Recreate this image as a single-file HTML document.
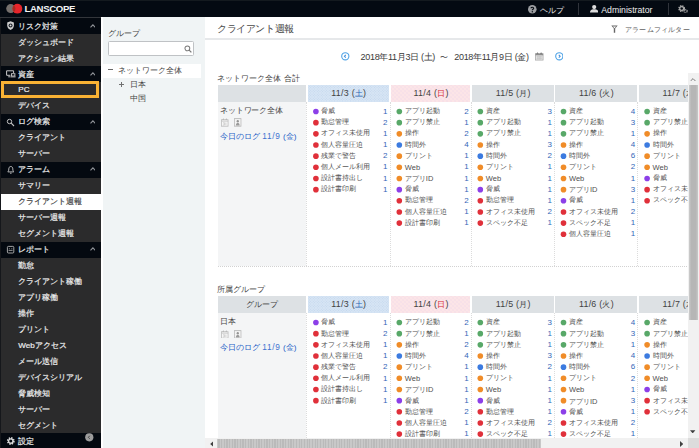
<!DOCTYPE html>
<html lang="ja"><head><meta charset="utf-8"><title>LANSCOPE</title>
<style>
*{box-sizing:border-box;margin:0;padding:0}
html,body{width:699px;height:448px;overflow:hidden;background:#fff}
body{position:relative;font-family:"Liberation Sans",sans-serif;font-size:8px;color:#3c3c3c;line-height:1}
.a{position:absolute}
.t{position:absolute;white-space:nowrap;line-height:1}
#top{left:0;top:0;width:699px;height:17px;background:#040a12;box-shadow:inset 0 1px 0 #141a1f}
#side{left:0;top:17px;width:101px;height:431px;background:#2b2b2c;overflow:hidden}
.sh{position:absolute;left:0;width:101px;height:16.1px;background:#040910}
.si{position:absolute;left:0;width:101px;height:16px}
.st{position:absolute;left:18.3px;top:4.5px;font-size:8.1px;color:#ececec;-webkit-text-stroke:.2px #ececec;white-space:nowrap;line-height:1}
.sh .st{left:17.8px;top:4.5px;font-size:8px;color:#ececec}
.chev{position:absolute;left:89.5px;top:5.6px;width:5.8px;height:4px}
.ico{position:absolute;left:6px;top:2px;width:10px;height:12px}
#grp{left:101px;top:17px;width:104px;height:431px;background:#f0f4f5}
#main{left:205px;top:17px;width:494px;height:431px;background:#fff;overflow:hidden}
.hd{position:absolute;height:16.9px;top:0;padding-left:.7px;font-size:8.9px;letter-spacing:.25px;color:#424242;text-align:center;line-height:17.4px;white-space:nowrap;overflow:hidden}
.c0{background:#dde1e4}
.cb{background:radial-gradient(circle,#c3d6ed .5px,rgba(195,214,237,0) .9px) 0 0/2.67px 2.67px,radial-gradient(circle,#c3d6ed .5px,rgba(195,214,237,0) .9px) 1.33px 1.33px/2.67px 2.67px,#d7e5f4}
.cp{background:radial-gradient(circle,#e6d2e9 .4px,rgba(230,210,233,0) .8px) 0 0/4px 4px,radial-gradient(circle,#e6d2e9 .4px,rgba(230,210,233,0) .8px) 2px 2px/4px 4px,#fce5e7}
.cg{background:#dde1e4}
.k{font-size:7.8px}.sat{color:#2b66b3}.sun{color:#d42a35}
.cell{position:absolute;background:#fff;border-right:0}
.vl{position:absolute;width:0;border-left:1px dotted #dcdcdc}
.hl{position:absolute;height:0;border-top:1px dotted #d2d2d2}
.it{position:absolute;font-size:6.9px;color:#505050;white-space:nowrap;line-height:1}
.nm{position:absolute;font-size:8px;color:#3567b8;white-space:nowrap;line-height:1;text-align:right;width:12px}
.d{position:absolute;left:0;top:0;width:6px;height:6px;border-radius:50%;transform-origin:0 0}
.P{background:#8c3fe8}.R{background:#e0303a}.G{background:#58a868}.O{background:#f08c28}.B{background:#3c7be0}
.lnk{color:#2560c6}
.l{font-size:7.5px}
</style></head><body>
<div id="top" class="a">
<svg class="a" style="left:0;top:0" width="30" height="17" viewBox="0 0 30 17"><circle cx="10.7" cy="8.6" r="4.5" fill="#75706d"/><circle cx="17.4" cy="8.7" r="4.9" fill="#e6252b"/><path d="M13.9 5.3A4.9 4.9 0 0 0 13.9 12.100A4.500 4.500 0 0 0 13.900 5.300Z" fill="#a52c22"/></svg>
<div class="t" style="left:24.5px;top:4px;font-size:9.6px;font-weight:bold;color:#f4f4f4;letter-spacing:-.35px">LANSCOPE</div>
<svg class="a" style="left:528.3px;top:5.2px" width="8.6" height="8.6" viewBox="0 0 10 10"><circle cx="5" cy="5" r="5" fill="#9c9ea1"/><path d="M3.5 3.9C3.5 2.2 6.6 2.2 6.6 3.9C6.6 5 5 5 5 6.2" stroke="#040a12" stroke-width="1.3" fill="none"/><circle cx="5" cy="7.8" r=".8" fill="#040a12"/></svg>
<div class="t" style="left:539.5px;top:5.8px;font-size:8.3px;color:#e6e6e6">ヘルプ</div>
<div class="a" style="left:578px;top:3px;width:1px;height:12px;background:#30343b"></div>
<svg class="a" style="left:589.6px;top:5px" width="8.4" height="7.6" viewBox="0 0 10 9"><circle cx="5" cy="2.5" r="2.5" fill="#dcdcdc"/><path d="M0 9C0 5.5 3 5 5 5S10 5.5 10 9Z" fill="#dcdcdc"/></svg>
<div class="t" style="left:601.3px;top:5.5px;font-size:8.7px;color:#ededed">Administrator</div>
<div class="a" style="left:667.5px;top:3px;width:1px;height:12px;background:#30343b"></div>
<svg class="a" style="left:678.4px;top:4.6px" width="10" height="8.4" viewBox="0 0 12 10"><circle cx="4.4" cy="4.2" r="3" fill="none" stroke="#a6a6a6" stroke-width="2.2" stroke-dasharray="1.5 0.9"/><circle cx="4.4" cy="4.2" r="2.3" fill="none" stroke="#a6a6a6" stroke-width="1.4"/><circle cx="9.2" cy="7.4" r="1.7" fill="none" stroke="#a6a6a6" stroke-width="1.6" stroke-dasharray="1 0.7"/></svg>
</div>
<div id="side" class="a">
<div class="a" style="left:0;top:0;width:101px;height:1.3px;background:#33363b"></div>
<div class="sh" style="top:1.1px"><svg class="ico" viewBox="0 0 10 12"><path d="M4.55 1.3L7.9 2.6V5.6C7.9 8 6.1 9.4 4.55 10.1C3 9.4 1.2 8 1.2 5.6V2.6Z" fill="#cfcfcf"/><circle cx="4.55" cy="5.4" r="2" fill="#1a1e26"/><circle cx="4.55" cy="5.4" r=".9" fill="#dedede"/></svg><span class="st">リスク対策</span><svg class="chev" viewBox="0 0 6 4"><path d="M.5 3.5L3 .8L5.5 3.5" fill="none" stroke="#8e9196" stroke-width="1.15"/></svg></div>
<div class="si" style="top:17.07px"><span class="st">ダッシュボード</span></div>
<div class="si" style="top:33.04px"><span class="st">アクション結果</span></div>
<div class="sh" style="top:49.010000000000005px"><svg class="ico" viewBox="0 0 10 12"><path d="M.6 2.8H7.6V5M.6 2.8V7.3H4.4M2.2 8.8H4.4" stroke="#c8c8c8" stroke-width="1" fill="none"/><rect x="5.5" y="5.7" width="3.4" height="2.3" fill="none" stroke="#c8c8c8" stroke-width=".9"/><path d="M4.6 8.9H9.6" stroke="#c8c8c8" stroke-width=".9"/></svg><span class="st">資産</span><svg class="chev" viewBox="0 0 6 4"><path d="M.5 3.5L3 .8L5.5 3.5" fill="none" stroke="#8e9196" stroke-width="1.15"/></svg></div>
<div class="si" style="top:64.98px"><span class="st">PC</span><div class="a" style="left:.9px;top:-1.2px;width:98.2px;height:17px;border:3px solid #f9b234"></div></div>
<div class="si" style="top:80.95px"><span class="st">デバイス</span></div>
<div class="sh" style="top:96.92px"><svg class="ico" viewBox="0 0 10 12"><circle cx="3.5" cy="5.500" r="2.2" fill="none" stroke="#c4c4c4" stroke-width="1"/><path d="M5.2 7.2L8 10" stroke="#c4c4c4" stroke-width="1.1"/></svg><span class="st">ログ検索</span><svg class="chev" viewBox="0 0 6 4"><path d="M.5 3.5L3 .8L5.5 3.5" fill="none" stroke="#8e9196" stroke-width="1.15"/></svg></div>
<div class="si" style="top:112.89px"><span class="st">クライアント</span></div>
<div class="si" style="top:128.86px"><span class="st">サーバー</span></div>
<div class="sh" style="top:144.83px"><svg class="ico" viewBox="0 0 10 12"><path d="M4.8 2.5C3.300 2.5 2.800 3.800 2.800 5C2.800 6.600 2.300 7.300 1.800 7.900H7.800C7.300 7.300 6.800 6.600 6.800 5C6.800 3.800 6.300 2.500 4.800 2.500Z" fill="none" stroke="#c4c4c4" stroke-width=".9"/><path d="M4 9.200H5.600" stroke="#c4c4c4" stroke-width=".9"/></svg><span class="st">アラーム</span><svg class="chev" viewBox="0 0 6 4"><path d="M.5 3.5L3 .8L5.5 3.5" fill="none" stroke="#8e9196" stroke-width="1.15"/></svg></div>
<div class="si" style="top:160.8px"><span class="st">サマリー</span></div>
<div class="si" style="top:176.77px;background:#fff"><span class="st" style="color:#3a3a3a;-webkit-text-stroke:.15px #3a3a3a">クライアント週報</span></div>
<div class="si" style="top:192.74px"><span class="st">サーバー週報</span></div>
<div class="si" style="top:208.71px"><span class="st">セグメント週報</span></div>
<div class="sh" style="top:224.68px"><svg class="ico" viewBox="0 0 10 12"><rect x="1.400" y="2.400" width="6.400" height="6.600" rx="1" fill="none" stroke="#b4b4b4" stroke-width=".9"/><path d="M2.600 6.400H6.600M3.400 5.200V4.300M5.800 5.200V4.300" stroke="#b4b4b4" stroke-width=".8"/></svg><span class="st">レポート</span><svg class="chev" viewBox="0 0 6 4"><path d="M.5 3.5L3 .8L5.5 3.5" fill="none" stroke="#8e9196" stroke-width="1.15"/></svg></div>
<div class="si" style="top:240.65px"><span class="st">勤怠</span></div>
<div class="si" style="top:256.62px"><span class="st">クライアント稼働</span></div>
<div class="si" style="top:272.59000000000003px"><span class="st">アプリ稼働</span></div>
<div class="si" style="top:288.56000000000006px"><span class="st">操作</span></div>
<div class="si" style="top:304.53000000000003px"><span class="st">プリント</span></div>
<div class="si" style="top:320.50000000000006px"><span class="st">Webアクセス</span></div>
<div class="si" style="top:336.47px"><span class="st">メール送信</span></div>
<div class="si" style="top:352.44000000000005px"><span class="st">デバイスシリアル</span></div>
<div class="si" style="top:368.41px"><span class="st">脅威検知</span></div>
<div class="si" style="top:384.38000000000005px"><span class="st">サーバー</span></div>
<div class="si" style="top:400.35px"><span class="st">セグメント</span></div>
<div class="sh" style="top:416.32000000000005px"><svg class="ico" viewBox="0 0 10 12"><circle cx="4.800" cy="6" r="3" fill="none" stroke="#dcdcdc" stroke-width="1.800" stroke-dasharray="1.300 1.056"/><circle cx="4.800" cy="6" r="2.200" fill="none" stroke="#dcdcdc" stroke-width="1.300"/></svg><span class="st">設定</span><svg class="a" style="left:85.4px;top:.1px" width="8.600" height="8.600" viewBox="0 0 9 9"><circle cx="4.500" cy="4.500" r="4.300" fill="#9c9c9c"/><path d="M5 2.900L3.500 4.500L5 6.100" stroke="#3a3a3a" stroke-width=".9" fill="none"/></svg></div>
<div class="a" style="left:0;top:1.3px;width:.8px;height:430px;background:#15171b"></div>
</div>
<div id="grp" class="a">
<div class="a" style="left:0;top:0;width:2.3px;height:431px;background:#fff"></div>
<div class="t" style="left:7.4px;top:13.4px;font-size:8.1px;color:#444">グループ</div>
<div class="a" style="left:7.4px;top:24.3px;width:85.4px;height:14.3px;background:#fff;border:1px solid #bfc2c5;border-radius:1.5px"></div>
<svg class="a" style="left:82.5px;top:27.5px" width="8" height="8" viewBox="0 0 10 10"><circle cx="4.2" cy="4.2" r="3" fill="none" stroke="#777" stroke-width="1.3"/><path d="M6.4 6.4L9.2 9.2" stroke="#777" stroke-width="1.6"/></svg>
<div class="a" style="left:2.3px;top:46.8px;width:97.7px;height:13.9px;background:#fff"></div>
<div class="a" style="left:7.3px;top:52.3px;width:4.8px;height:1px;background:#6a6a6a"></div>
<div class="t" style="left:17px;top:50.1px;font-size:8.05px;color:#444">ネットワーク全体</div>
<div class="a" style="left:18px;top:66.5px;width:5px;height:1px;background:#707070"></div><div class="a" style="left:20px;top:64.5px;width:1px;height:5px;background:#707070"></div>
<div class="t" style="left:28.6px;top:64.1px;font-size:8.1px;color:#444">日本</div>
<div class="t" style="left:28.6px;top:77.7px;font-size:8.1px;color:#444">中国</div>
</div>
<div id="main" class="a">
<div class="t" style="left:12.3px;top:6.6px;font-size:10px;letter-spacing:-.45px;color:#484848">クライアント週報</div>
<div class="a" style="left:0;top:21.3px;width:494px;height:1.3px;background:#e6e8ea"></div>
<svg class="a" style="left:405.8px;top:7.8px" width="7" height="8.2" viewBox="0 0 9 10" preserveAspectRatio="none"><path d="M.4 .5H8.6L5.4 4.4V9.5H3.6V4.4Z" fill="#666"/><path d="M2.4 1.7H6.6L4.5 4Z" fill="#fff"/></svg>
<div class="t" style="left:420px;top:8.5px;font-size:7.3px;letter-spacing:.2px;color:#5a5a5a">アラームフィルター</div>
<svg class="a" style="left:136.1px;top:35.1px" width="8.6" height="8.6" viewBox="0 0 10 10"><circle cx="5" cy="5" r="4.2" fill="#fff" stroke="#4da2e6" stroke-width="1.25"/><path d="M5.6 3.4L4 5L5.6 6.6" fill="none" stroke="#3f8fdc" stroke-width="1.2"/></svg>
<div class="t" style="left:155.6px;top:35.6px;font-size:9px;letter-spacing:-.32px;color:#3a3a3a">2018年11月3日 (土)</div>
<div class="t" style="left:235.4px;top:35.9px;font-size:8.4px;color:#3a3a3a">〜</div>
<div class="t" style="left:249.3px;top:35.6px;font-size:9px;letter-spacing:-.32px;color:#3a3a3a">2018年11月9日 (金)</div>
<svg class="a" style="left:330.4px;top:35.2px" width="8.6" height="8.5" viewBox="0 0 10 10" preserveAspectRatio="none"><rect x=".6" y="2" width="8.8" height="7.500" fill="#e9e9e9" stroke="#a8a8a8" stroke-width=".9"/><rect x=".6" y="2" width="8.8" height="1.900" fill="#8c8c8c"/><path d="M1.600 2.200L2.900 .3L4.200 2.200ZM5.800 2.200L7.100 .3L8.400 2.200Z" fill="#6e6e6e"/><path d="M1.600 5.600H8.400M1.600 7.400H8.400M3.300 4.300V8.900M5 4.300V8.900M6.700 4.300V8.900" stroke="#bdbdbd" stroke-width=".7"/></svg>
<svg class="a" style="left:349.8px;top:35.1px" width="8.6" height="8.6" viewBox="0 0 10 10"><circle cx="5" cy="5" r="4.2" fill="#fff" stroke="#4da2e6" stroke-width="1.25"/><path d="M4.4 3.4L6 5L4.4 6.6" fill="none" stroke="#3f8fdc" stroke-width="1.2"/></svg>
<div class="t" style="left:12.4px;top:57.6px;font-size:7.95px;color:#444">ネットワーク全体 合計</div>
<div class="a" style="left:0;top:67.8px;width:483px;height:181.7px">
<div class="hd c0" style="left:12.7px;width:88.3px;font-size:7.8px;letter-spacing:0"></div>
<div class="a" style="left:12.7px;top:17.3px;width:88.3px;height:164.4px;background:#f4f5f6"></div>
<div class="t" style="left:15.0px;top:22.2px;font-size:7.95px;letter-spacing:-.15px;color:#444">ネットワーク全体</div>
<svg class="a" style="left:16.3px;top:33.6px" width="7.6" height="8.8" viewBox="0 0 10 10" preserveAspectRatio="none"><rect x=".7" y="2" width="8.6" height="7.300" fill="#f6f6f6" stroke="#bcbcbc" stroke-width="1"/><path d="M.7 3.600H9.300" stroke="#c4c4c4" stroke-width="1"/><path d="M1.800 2.100L3 .4L4.200 2.100ZM5.800 2.100L7 .4L8.200 2.100Z" fill="#b0b0b0"/><path d="M3 5.200H4.400V8H2.800M4.400 6.600H3.400M6.400 5.200V8" stroke="#c2c2c2" stroke-width=".8" fill="none"/></svg>
<svg class="a" style="left:29.3px;top:33.6px" width="7.5" height="8.8" viewBox="0 0 10 10" preserveAspectRatio="none"><rect x=".7" y=".7" width="8.600" height="8.600" fill="#f4f4f4" stroke="#b8b8b8" stroke-width="1"/><circle cx="5" cy="3.700" r="1.500" fill="#949494"/><path d="M2.500 8.400C2.500 6.200 3.800 5.700 5 5.700S7.500 6.200 7.500 8.400Z" fill="#9a9a9a"/></svg>
<div class="t lnk" style="left:14.9px;top:47.1px;font-size:8.1px">今日のログ <span style="font-size:8.3px;letter-spacing:.75px;color:#3c72d0">11/9</span> (金)</div>
<div class="vl" style="left:101.4px;top:17.3px;height:164.4px"></div>
<div class="hd cb" style="left:102.7px;width:81.6px">11/3 (<span class="k sat">土</span>)</div>
<div class="vl" style="left:184.6px;top:17.3px;height:164.4px"></div>
<div class="d P" style="transform:translate(108.10px,23.70px) scale(.935)"></div>
<div class="it" style="left:116.4px;top:23.4px">脅威</div>
<div class="nm" style="left:170.5px;top:22.8px">1</div>
<div class="d R" style="transform:translate(108.10px,34.86px) scale(.935)"></div>
<div class="it" style="left:116.4px;top:34.6px">勤怠管理</div>
<div class="nm" style="left:170.5px;top:34.0px">2</div>
<div class="d R" style="transform:translate(108.10px,46.02px) scale(.935)"></div>
<div class="it" style="left:116.4px;top:45.7px">オフィス未使用</div>
<div class="nm" style="left:170.5px;top:45.1px">1</div>
<div class="d R" style="transform:translate(108.10px,57.18px) scale(.935)"></div>
<div class="it" style="left:116.4px;top:56.9px">個人容量圧迫</div>
<div class="nm" style="left:170.5px;top:56.3px">1</div>
<div class="d R" style="transform:translate(108.10px,68.34px) scale(.935)"></div>
<div class="it" style="left:116.4px;top:68.0px">残業で警告</div>
<div class="nm" style="left:170.5px;top:67.4px">2</div>
<div class="d R" style="transform:translate(108.10px,79.50px) scale(.935)"></div>
<div class="it" style="left:116.4px;top:79.2px">個人メール利用</div>
<div class="nm" style="left:170.5px;top:78.6px">1</div>
<div class="d R" style="transform:translate(108.10px,90.66px) scale(.935)"></div>
<div class="it" style="left:116.4px;top:90.4px">設計書持出し</div>
<div class="nm" style="left:170.5px;top:89.8px">1</div>
<div class="d R" style="transform:translate(108.10px,101.82px) scale(.935)"></div>
<div class="it" style="left:116.4px;top:101.5px">設計書印刷</div>
<div class="nm" style="left:170.5px;top:100.9px">1</div>
<div class="hd cp" style="left:186.1px;width:79.3px">11/4 (<span class="k sun">日</span>)</div>
<div class="vl" style="left:265.7px;top:17.3px;height:164.4px"></div>
<div class="d G" style="transform:translate(191.50px,23.70px) scale(.935)"></div>
<div class="it" style="left:199.8px;top:23.4px">アプリ起動</div>
<div class="nm" style="left:251.6px;top:22.8px">2</div>
<div class="d G" style="transform:translate(191.50px,34.86px) scale(.935)"></div>
<div class="it" style="left:199.8px;top:34.6px">アプリ禁止</div>
<div class="nm" style="left:251.6px;top:34.0px">1</div>
<div class="d O" style="transform:translate(191.50px,46.02px) scale(.935)"></div>
<div class="it" style="left:199.8px;top:45.7px">操作</div>
<div class="nm" style="left:251.6px;top:45.1px">2</div>
<div class="d B" style="transform:translate(191.50px,57.18px) scale(.935)"></div>
<div class="it" style="left:199.8px;top:56.9px">時間外</div>
<div class="nm" style="left:251.6px;top:56.3px">4</div>
<div class="d O" style="transform:translate(191.50px,68.34px) scale(.935)"></div>
<div class="it" style="left:199.8px;top:68.0px">プリント</div>
<div class="nm" style="left:251.6px;top:67.4px">1</div>
<div class="d O" style="transform:translate(191.50px,79.50px) scale(.935)"></div>
<div class="it" style="left:199.8px;top:79.2px"><span class="l">Web</span></div>
<div class="nm" style="left:251.6px;top:78.6px">1</div>
<div class="d O" style="transform:translate(191.50px,90.66px) scale(.935)"></div>
<div class="it" style="left:199.8px;top:90.4px">アプリ<span class="l">ID</span></div>
<div class="nm" style="left:251.6px;top:89.8px">1</div>
<div class="d P" style="transform:translate(191.50px,101.82px) scale(.935)"></div>
<div class="it" style="left:199.8px;top:101.5px">脅威</div>
<div class="nm" style="left:251.6px;top:100.9px">1</div>
<div class="d R" style="transform:translate(191.50px,112.98px) scale(.935)"></div>
<div class="it" style="left:199.8px;top:112.7px">勤怠管理</div>
<div class="nm" style="left:251.6px;top:112.1px">2</div>
<div class="d R" style="transform:translate(191.50px,124.14px) scale(.935)"></div>
<div class="it" style="left:199.8px;top:123.8px">個人容量圧迫</div>
<div class="nm" style="left:251.6px;top:123.2px">1</div>
<div class="d R" style="transform:translate(191.50px,135.30px) scale(.935)"></div>
<div class="it" style="left:199.8px;top:135.0px">設計書印刷</div>
<div class="nm" style="left:251.6px;top:134.4px">1</div>
<div class="hd cg" style="left:267.1px;width:81.6px">11/5 (<span class="k">月</span>)</div>
<div class="vl" style="left:349.0px;top:17.3px;height:164.4px"></div>
<div class="d G" style="transform:translate(272.50px,23.70px) scale(.935)"></div>
<div class="it" style="left:280.8px;top:23.4px">資産</div>
<div class="nm" style="left:334.9px;top:22.8px">3</div>
<div class="d G" style="transform:translate(272.50px,34.86px) scale(.935)"></div>
<div class="it" style="left:280.8px;top:34.6px">アプリ起動</div>
<div class="nm" style="left:334.9px;top:34.0px">1</div>
<div class="d G" style="transform:translate(272.50px,46.02px) scale(.935)"></div>
<div class="it" style="left:280.8px;top:45.7px">アプリ禁止</div>
<div class="nm" style="left:334.9px;top:45.1px">1</div>
<div class="d O" style="transform:translate(272.50px,57.18px) scale(.935)"></div>
<div class="it" style="left:280.8px;top:56.9px">操作</div>
<div class="nm" style="left:334.9px;top:56.3px">3</div>
<div class="d B" style="transform:translate(272.50px,68.34px) scale(.935)"></div>
<div class="it" style="left:280.8px;top:68.0px">時間外</div>
<div class="nm" style="left:334.9px;top:67.4px">2</div>
<div class="d O" style="transform:translate(272.50px,79.50px) scale(.935)"></div>
<div class="it" style="left:280.8px;top:79.2px">プリント</div>
<div class="nm" style="left:334.9px;top:78.6px">1</div>
<div class="d O" style="transform:translate(272.50px,90.66px) scale(.935)"></div>
<div class="it" style="left:280.8px;top:90.4px"><span class="l">Web</span></div>
<div class="nm" style="left:334.9px;top:89.8px">1</div>
<div class="d P" style="transform:translate(272.50px,101.82px) scale(.935)"></div>
<div class="it" style="left:280.8px;top:101.5px">脅威</div>
<div class="nm" style="left:334.9px;top:100.9px">1</div>
<div class="d R" style="transform:translate(272.50px,112.98px) scale(.935)"></div>
<div class="it" style="left:280.8px;top:112.7px">勤怠管理</div>
<div class="nm" style="left:334.9px;top:112.1px">1</div>
<div class="d R" style="transform:translate(272.50px,124.14px) scale(.935)"></div>
<div class="it" style="left:280.8px;top:123.8px">オフィス未使用</div>
<div class="nm" style="left:334.9px;top:123.2px">2</div>
<div class="d R" style="transform:translate(272.50px,135.30px) scale(.935)"></div>
<div class="it" style="left:280.8px;top:135.0px">スペック不足</div>
<div class="nm" style="left:334.9px;top:134.4px">1</div>
<div class="hd cg" style="left:350.3px;width:81.6px">11/6 (<span class="k">火</span>)</div>
<div class="vl" style="left:432.2px;top:17.3px;height:164.4px"></div>
<div class="d G" style="transform:translate(355.70px,23.70px) scale(.935)"></div>
<div class="it" style="left:364.0px;top:23.4px">資産</div>
<div class="nm" style="left:418.1px;top:22.8px">4</div>
<div class="d G" style="transform:translate(355.70px,34.86px) scale(.935)"></div>
<div class="it" style="left:364.0px;top:34.6px">アプリ起動</div>
<div class="nm" style="left:418.1px;top:34.0px">3</div>
<div class="d G" style="transform:translate(355.70px,46.02px) scale(.935)"></div>
<div class="it" style="left:364.0px;top:45.7px">アプリ禁止</div>
<div class="nm" style="left:418.1px;top:45.1px">1</div>
<div class="d O" style="transform:translate(355.70px,57.18px) scale(.935)"></div>
<div class="it" style="left:364.0px;top:56.9px">操作</div>
<div class="nm" style="left:418.1px;top:56.3px">4</div>
<div class="d B" style="transform:translate(355.70px,68.34px) scale(.935)"></div>
<div class="it" style="left:364.0px;top:68.0px">時間外</div>
<div class="nm" style="left:418.1px;top:67.4px">6</div>
<div class="d O" style="transform:translate(355.70px,79.50px) scale(.935)"></div>
<div class="it" style="left:364.0px;top:79.2px">プリント</div>
<div class="nm" style="left:418.1px;top:78.6px">2</div>
<div class="d O" style="transform:translate(355.70px,90.66px) scale(.935)"></div>
<div class="it" style="left:364.0px;top:90.4px"><span class="l">Web</span></div>
<div class="nm" style="left:418.1px;top:89.8px">1</div>
<div class="d O" style="transform:translate(355.70px,101.82px) scale(.935)"></div>
<div class="it" style="left:364.0px;top:101.5px">アプリ<span class="l">ID</span></div>
<div class="nm" style="left:418.1px;top:100.9px">3</div>
<div class="d P" style="transform:translate(355.70px,112.98px) scale(.935)"></div>
<div class="it" style="left:364.0px;top:112.7px">脅威</div>
<div class="nm" style="left:418.1px;top:112.1px">1</div>
<div class="d R" style="transform:translate(355.70px,124.14px) scale(.935)"></div>
<div class="it" style="left:364.0px;top:123.8px">オフィス未使用</div>
<div class="nm" style="left:418.1px;top:123.2px">2</div>
<div class="d R" style="transform:translate(355.70px,135.30px) scale(.935)"></div>
<div class="it" style="left:364.0px;top:135.0px">スペック不足</div>
<div class="nm" style="left:418.1px;top:134.4px">1</div>
<div class="d R" style="transform:translate(355.70px,146.46px) scale(.935)"></div>
<div class="it" style="left:364.0px;top:146.2px">個人容量圧迫</div>
<div class="nm" style="left:418.1px;top:145.6px">1</div>
<div class="hd cg" style="left:433.9px;width:81.6px">11/7 (<span class="k">水</span>)</div>
<div class="vl" style="left:515.8px;top:17.3px;height:164.4px"></div>
<div class="d G" style="transform:translate(439.30px,23.70px) scale(.935)"></div>
<div class="it" style="left:447.6px;top:23.4px">資産</div>
<div class="nm" style="left:501.7px;top:22.8px">2</div>
<div class="d G" style="transform:translate(439.30px,34.86px) scale(.935)"></div>
<div class="it" style="left:447.6px;top:34.6px">アプリ禁止</div>
<div class="nm" style="left:501.7px;top:34.0px">1</div>
<div class="d O" style="transform:translate(439.30px,46.02px) scale(.935)"></div>
<div class="it" style="left:447.6px;top:45.7px">操作</div>
<div class="nm" style="left:501.7px;top:45.1px">3</div>
<div class="d B" style="transform:translate(439.30px,57.18px) scale(.935)"></div>
<div class="it" style="left:447.6px;top:56.9px">時間外</div>
<div class="nm" style="left:501.7px;top:56.3px">2</div>
<div class="d O" style="transform:translate(439.30px,68.34px) scale(.935)"></div>
<div class="it" style="left:447.6px;top:68.0px">プリント</div>
<div class="nm" style="left:501.7px;top:67.4px">1</div>
<div class="d O" style="transform:translate(439.30px,79.50px) scale(.935)"></div>
<div class="it" style="left:447.6px;top:79.2px"><span class="l">Web</span></div>
<div class="nm" style="left:501.7px;top:78.6px">1</div>
<div class="d P" style="transform:translate(439.30px,90.66px) scale(.935)"></div>
<div class="it" style="left:447.6px;top:90.4px">脅威</div>
<div class="nm" style="left:501.7px;top:89.8px">1</div>
<div class="d R" style="transform:translate(439.30px,101.82px) scale(.935)"></div>
<div class="it" style="left:447.6px;top:101.5px">オフィス未使用</div>
<div class="nm" style="left:501.7px;top:100.9px">1</div>
<div class="d R" style="transform:translate(439.30px,112.98px) scale(.935)"></div>
<div class="it" style="left:447.6px;top:112.7px">スペック不足</div>
<div class="nm" style="left:501.7px;top:112.1px">1</div>
</div>
<div class="hl" style="left:12.7px;top:249.4px;width:471px"></div>
<div class="t" style="left:12.4px;top:269px;font-size:7.95px;color:#444">所属グループ</div>
<div class="a" style="left:0;top:279.0px;width:483px;height:142.2px">
<div class="hd c0" style="left:12.7px;width:88.3px;font-size:7.8px;letter-spacing:0">グループ</div>
<div class="a" style="left:12.7px;top:17.3px;width:88.3px;height:124.9px;background:#f4f5f6"></div>
<div class="t" style="left:15.0px;top:22.2px;font-size:7.95px;letter-spacing:-.15px;color:#444">日本</div>
<svg class="a" style="left:16.3px;top:33.6px" width="7.6" height="8.8" viewBox="0 0 10 10" preserveAspectRatio="none"><rect x=".7" y="2" width="8.6" height="7.300" fill="#f6f6f6" stroke="#bcbcbc" stroke-width="1"/><path d="M.7 3.600H9.300" stroke="#c4c4c4" stroke-width="1"/><path d="M1.800 2.100L3 .4L4.200 2.100ZM5.800 2.100L7 .4L8.200 2.100Z" fill="#b0b0b0"/><path d="M3 5.200H4.400V8H2.800M4.400 6.600H3.400M6.400 5.200V8" stroke="#c2c2c2" stroke-width=".8" fill="none"/></svg>
<svg class="a" style="left:29.3px;top:33.6px" width="7.5" height="8.8" viewBox="0 0 10 10" preserveAspectRatio="none"><rect x=".7" y=".7" width="8.600" height="8.600" fill="#f4f4f4" stroke="#b8b8b8" stroke-width="1"/><circle cx="5" cy="3.700" r="1.500" fill="#949494"/><path d="M2.500 8.400C2.500 6.200 3.800 5.700 5 5.700S7.500 6.200 7.500 8.400Z" fill="#9a9a9a"/></svg>
<div class="t lnk" style="left:14.9px;top:47.1px;font-size:8.1px">今日のログ <span style="font-size:8.3px;letter-spacing:.75px;color:#3c72d0">11/9</span> (金)</div>
<div class="vl" style="left:101.4px;top:17.3px;height:124.9px"></div>
<div class="hd cb" style="left:102.7px;width:81.6px">11/3 (<span class="k sat">土</span>)</div>
<div class="vl" style="left:184.6px;top:17.3px;height:124.9px"></div>
<div class="d P" style="transform:translate(108.10px,23.70px) scale(.935)"></div>
<div class="it" style="left:116.4px;top:23.4px">脅威</div>
<div class="nm" style="left:170.5px;top:22.8px">1</div>
<div class="d R" style="transform:translate(108.10px,34.86px) scale(.935)"></div>
<div class="it" style="left:116.4px;top:34.6px">勤怠管理</div>
<div class="nm" style="left:170.5px;top:34.0px">2</div>
<div class="d R" style="transform:translate(108.10px,46.02px) scale(.935)"></div>
<div class="it" style="left:116.4px;top:45.7px">オフィス未使用</div>
<div class="nm" style="left:170.5px;top:45.1px">1</div>
<div class="d R" style="transform:translate(108.10px,57.18px) scale(.935)"></div>
<div class="it" style="left:116.4px;top:56.9px">個人容量圧迫</div>
<div class="nm" style="left:170.5px;top:56.3px">1</div>
<div class="d R" style="transform:translate(108.10px,68.34px) scale(.935)"></div>
<div class="it" style="left:116.4px;top:68.0px">残業で警告</div>
<div class="nm" style="left:170.5px;top:67.4px">2</div>
<div class="d R" style="transform:translate(108.10px,79.50px) scale(.935)"></div>
<div class="it" style="left:116.4px;top:79.2px">個人メール利用</div>
<div class="nm" style="left:170.5px;top:78.6px">1</div>
<div class="d R" style="transform:translate(108.10px,90.66px) scale(.935)"></div>
<div class="it" style="left:116.4px;top:90.4px">設計書持出し</div>
<div class="nm" style="left:170.5px;top:89.8px">1</div>
<div class="d R" style="transform:translate(108.10px,101.82px) scale(.935)"></div>
<div class="it" style="left:116.4px;top:101.5px">設計書印刷</div>
<div class="nm" style="left:170.5px;top:100.9px">1</div>
<div class="hd cp" style="left:186.1px;width:79.3px">11/4 (<span class="k sun">日</span>)</div>
<div class="vl" style="left:265.7px;top:17.3px;height:124.9px"></div>
<div class="d G" style="transform:translate(191.50px,23.70px) scale(.935)"></div>
<div class="it" style="left:199.8px;top:23.4px">アプリ起動</div>
<div class="nm" style="left:251.6px;top:22.8px">2</div>
<div class="d G" style="transform:translate(191.50px,34.86px) scale(.935)"></div>
<div class="it" style="left:199.8px;top:34.6px">アプリ禁止</div>
<div class="nm" style="left:251.6px;top:34.0px">1</div>
<div class="d O" style="transform:translate(191.50px,46.02px) scale(.935)"></div>
<div class="it" style="left:199.8px;top:45.7px">操作</div>
<div class="nm" style="left:251.6px;top:45.1px">2</div>
<div class="d B" style="transform:translate(191.50px,57.18px) scale(.935)"></div>
<div class="it" style="left:199.8px;top:56.9px">時間外</div>
<div class="nm" style="left:251.6px;top:56.3px">4</div>
<div class="d O" style="transform:translate(191.50px,68.34px) scale(.935)"></div>
<div class="it" style="left:199.8px;top:68.0px">プリント</div>
<div class="nm" style="left:251.6px;top:67.4px">1</div>
<div class="d O" style="transform:translate(191.50px,79.50px) scale(.935)"></div>
<div class="it" style="left:199.8px;top:79.2px"><span class="l">Web</span></div>
<div class="nm" style="left:251.6px;top:78.6px">1</div>
<div class="d O" style="transform:translate(191.50px,90.66px) scale(.935)"></div>
<div class="it" style="left:199.8px;top:90.4px">アプリ<span class="l">ID</span></div>
<div class="nm" style="left:251.6px;top:89.8px">1</div>
<div class="d P" style="transform:translate(191.50px,101.82px) scale(.935)"></div>
<div class="it" style="left:199.8px;top:101.5px">脅威</div>
<div class="nm" style="left:251.6px;top:100.9px">1</div>
<div class="d R" style="transform:translate(191.50px,112.98px) scale(.935)"></div>
<div class="it" style="left:199.8px;top:112.7px">勤怠管理</div>
<div class="nm" style="left:251.6px;top:112.1px">2</div>
<div class="d R" style="transform:translate(191.50px,124.14px) scale(.935)"></div>
<div class="it" style="left:199.8px;top:123.8px">個人容量圧迫</div>
<div class="nm" style="left:251.6px;top:123.2px">1</div>
<div class="d R" style="transform:translate(191.50px,135.30px) scale(.935)"></div>
<div class="it" style="left:199.8px;top:135.0px">設計書印刷</div>
<div class="nm" style="left:251.6px;top:134.4px">1</div>
<div class="hd cg" style="left:267.1px;width:81.6px">11/5 (<span class="k">月</span>)</div>
<div class="vl" style="left:349.0px;top:17.3px;height:124.9px"></div>
<div class="d G" style="transform:translate(272.50px,23.70px) scale(.935)"></div>
<div class="it" style="left:280.8px;top:23.4px">資産</div>
<div class="nm" style="left:334.9px;top:22.8px">3</div>
<div class="d G" style="transform:translate(272.50px,34.86px) scale(.935)"></div>
<div class="it" style="left:280.8px;top:34.6px">アプリ起動</div>
<div class="nm" style="left:334.9px;top:34.0px">1</div>
<div class="d G" style="transform:translate(272.50px,46.02px) scale(.935)"></div>
<div class="it" style="left:280.8px;top:45.7px">アプリ禁止</div>
<div class="nm" style="left:334.9px;top:45.1px">1</div>
<div class="d O" style="transform:translate(272.50px,57.18px) scale(.935)"></div>
<div class="it" style="left:280.8px;top:56.9px">操作</div>
<div class="nm" style="left:334.9px;top:56.3px">3</div>
<div class="d B" style="transform:translate(272.50px,68.34px) scale(.935)"></div>
<div class="it" style="left:280.8px;top:68.0px">時間外</div>
<div class="nm" style="left:334.9px;top:67.4px">2</div>
<div class="d O" style="transform:translate(272.50px,79.50px) scale(.935)"></div>
<div class="it" style="left:280.8px;top:79.2px">プリント</div>
<div class="nm" style="left:334.9px;top:78.6px">1</div>
<div class="d O" style="transform:translate(272.50px,90.66px) scale(.935)"></div>
<div class="it" style="left:280.8px;top:90.4px"><span class="l">Web</span></div>
<div class="nm" style="left:334.9px;top:89.8px">1</div>
<div class="d P" style="transform:translate(272.50px,101.82px) scale(.935)"></div>
<div class="it" style="left:280.8px;top:101.5px">脅威</div>
<div class="nm" style="left:334.9px;top:100.9px">1</div>
<div class="d R" style="transform:translate(272.50px,112.98px) scale(.935)"></div>
<div class="it" style="left:280.8px;top:112.7px">勤怠管理</div>
<div class="nm" style="left:334.9px;top:112.1px">1</div>
<div class="d R" style="transform:translate(272.50px,124.14px) scale(.935)"></div>
<div class="it" style="left:280.8px;top:123.8px">オフィス未使用</div>
<div class="nm" style="left:334.9px;top:123.2px">2</div>
<div class="d R" style="transform:translate(272.50px,135.30px) scale(.935)"></div>
<div class="it" style="left:280.8px;top:135.0px">スペック不足</div>
<div class="nm" style="left:334.9px;top:134.4px">1</div>
<div class="hd cg" style="left:350.3px;width:81.6px">11/6 (<span class="k">火</span>)</div>
<div class="vl" style="left:432.2px;top:17.3px;height:124.9px"></div>
<div class="d G" style="transform:translate(355.70px,23.70px) scale(.935)"></div>
<div class="it" style="left:364.0px;top:23.4px">資産</div>
<div class="nm" style="left:418.1px;top:22.8px">4</div>
<div class="d G" style="transform:translate(355.70px,34.86px) scale(.935)"></div>
<div class="it" style="left:364.0px;top:34.6px">アプリ起動</div>
<div class="nm" style="left:418.1px;top:34.0px">3</div>
<div class="d G" style="transform:translate(355.70px,46.02px) scale(.935)"></div>
<div class="it" style="left:364.0px;top:45.7px">アプリ禁止</div>
<div class="nm" style="left:418.1px;top:45.1px">1</div>
<div class="d O" style="transform:translate(355.70px,57.18px) scale(.935)"></div>
<div class="it" style="left:364.0px;top:56.9px">操作</div>
<div class="nm" style="left:418.1px;top:56.3px">4</div>
<div class="d B" style="transform:translate(355.70px,68.34px) scale(.935)"></div>
<div class="it" style="left:364.0px;top:68.0px">時間外</div>
<div class="nm" style="left:418.1px;top:67.4px">6</div>
<div class="d O" style="transform:translate(355.70px,79.50px) scale(.935)"></div>
<div class="it" style="left:364.0px;top:79.2px">プリント</div>
<div class="nm" style="left:418.1px;top:78.6px">2</div>
<div class="d O" style="transform:translate(355.70px,90.66px) scale(.935)"></div>
<div class="it" style="left:364.0px;top:90.4px"><span class="l">Web</span></div>
<div class="nm" style="left:418.1px;top:89.8px">1</div>
<div class="d O" style="transform:translate(355.70px,101.82px) scale(.935)"></div>
<div class="it" style="left:364.0px;top:101.5px">アプリ<span class="l">ID</span></div>
<div class="nm" style="left:418.1px;top:100.9px">3</div>
<div class="d P" style="transform:translate(355.70px,112.98px) scale(.935)"></div>
<div class="it" style="left:364.0px;top:112.7px">脅威</div>
<div class="nm" style="left:418.1px;top:112.1px">1</div>
<div class="d R" style="transform:translate(355.70px,124.14px) scale(.935)"></div>
<div class="it" style="left:364.0px;top:123.8px">オフィス未使用</div>
<div class="nm" style="left:418.1px;top:123.2px">2</div>
<div class="d R" style="transform:translate(355.70px,135.30px) scale(.935)"></div>
<div class="it" style="left:364.0px;top:135.0px">スペック不足</div>
<div class="nm" style="left:418.1px;top:134.4px">1</div>
<div class="hd cg" style="left:433.9px;width:81.6px">11/7 (<span class="k">水</span>)</div>
<div class="vl" style="left:515.8px;top:17.3px;height:124.9px"></div>
<div class="d G" style="transform:translate(439.30px,23.70px) scale(.935)"></div>
<div class="it" style="left:447.6px;top:23.4px">資産</div>
<div class="nm" style="left:501.7px;top:22.8px">2</div>
<div class="d G" style="transform:translate(439.30px,34.86px) scale(.935)"></div>
<div class="it" style="left:447.6px;top:34.6px">アプリ禁止</div>
<div class="nm" style="left:501.7px;top:34.0px">1</div>
<div class="d O" style="transform:translate(439.30px,46.02px) scale(.935)"></div>
<div class="it" style="left:447.6px;top:45.7px">操作</div>
<div class="nm" style="left:501.7px;top:45.1px">3</div>
<div class="d B" style="transform:translate(439.30px,57.18px) scale(.935)"></div>
<div class="it" style="left:447.6px;top:56.9px">時間外</div>
<div class="nm" style="left:501.7px;top:56.3px">2</div>
<div class="d O" style="transform:translate(439.30px,68.34px) scale(.935)"></div>
<div class="it" style="left:447.6px;top:68.0px">プリント</div>
<div class="nm" style="left:501.7px;top:67.4px">1</div>
<div class="d O" style="transform:translate(439.30px,79.50px) scale(.935)"></div>
<div class="it" style="left:447.6px;top:79.2px"><span class="l">Web</span></div>
<div class="nm" style="left:501.7px;top:78.6px">1</div>
<div class="d P" style="transform:translate(439.30px,90.66px) scale(.935)"></div>
<div class="it" style="left:447.6px;top:90.4px">脅威</div>
<div class="nm" style="left:501.7px;top:89.8px">1</div>
<div class="d R" style="transform:translate(439.30px,101.82px) scale(.935)"></div>
<div class="it" style="left:447.6px;top:101.5px">オフィス未使用</div>
<div class="nm" style="left:501.7px;top:100.9px">1</div>
<div class="d R" style="transform:translate(439.30px,112.98px) scale(.935)"></div>
<div class="it" style="left:447.6px;top:112.7px">スペック不足</div>
<div class="nm" style="left:501.7px;top:112.1px">1</div>
</div>
<div class="a" style="left:482.7px;top:56.3px;width:11.3px;height:364.9px;background:#f1f1f1"></div>
<div class="a" style="left:484.2px;top:68px;width:8.9px;height:235px;background:linear-gradient(90deg,#cdcdcd,#b6b6b6 25%,#b6b6b6 75%,#c8c8c8)"></div>
<svg class="a" style="left:485.4px;top:60.6px" width="6" height="3.6" viewBox="0 0 6 3.6"><path d="M.4 3.2L3 .6L5.6 3.2" fill="none" stroke="#7a7a7a" stroke-width="1"/></svg>
<svg class="a" style="left:485.4px;top:413px" width="5.4" height="3.4" viewBox="0 0 6 3.6"><path d="M0 .2H6L3 3.6Z" fill="#404040"/></svg>
<div class="a" style="left:0;top:421.2px;width:494px;height:9.8px;background:#f1f1f1"></div>
<div class="a" style="left:12.3px;top:422.1px;width:324px;height:8.9px;background:repeating-linear-gradient(90deg,#c8c8c8 0,#c8c8c8 1.4px,#bababa 1.4px,#bababa 2.67px)"></div>
<svg class="a" style="left:4.6px;top:423.6px" width="3.6" height="6" viewBox="0 0 3.6 6"><path d="M3.6 0V6L.2 3Z" fill="#404040"/></svg>
<svg class="a" style="left:474.6px;top:423.6px" width="3.6" height="6" viewBox="0 0 3.6 6"><path d="M0 0V6L3.4 3Z" fill="#404040"/></svg>
<div class="a" style="left:482.7px;top:421.2px;width:11.3px;height:9.8px;background:#dcdcdc"></div>
</div>
</body></html>
